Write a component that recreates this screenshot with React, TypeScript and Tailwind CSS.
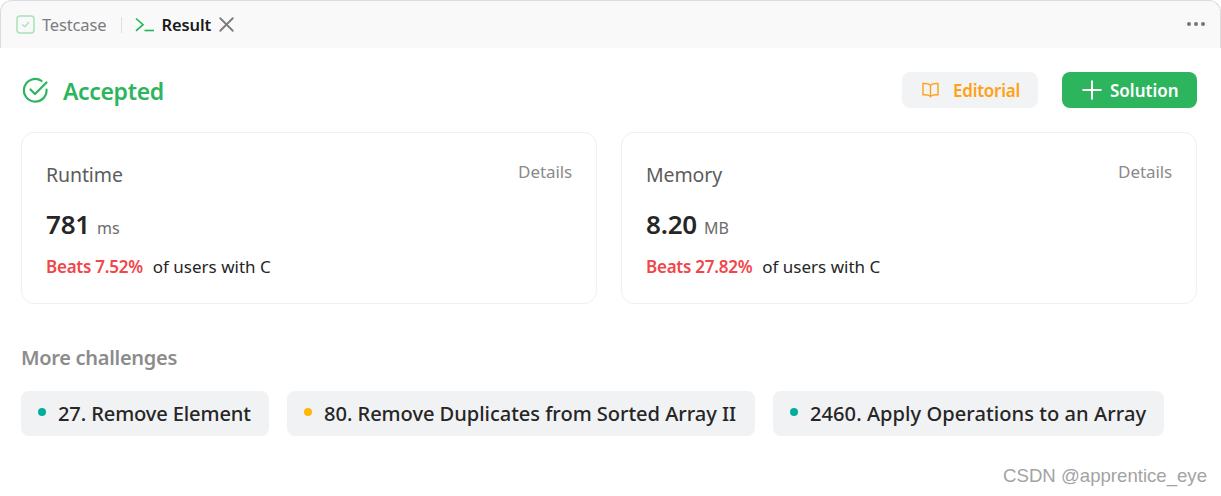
import { Plus, X } from "lucide-react";

const font = { fontFamily: '"Noto Sans", sans-serif' };

function StatCard({ title, value, unit, beats }: { title: string; value: string; unit: string; beats: string }) {
    return (
        <div className="flex-1 h-[172px] rounded-[13px] border border-[#f0f0f0] pl-6 pr-6 pt-[26px]">
            <div className="flex justify-between">
                <span className="text-[19.5px] leading-[32px] text-[#5c5c5c] tracking-[-0.1px]">{title}</span>
                <span className="text-[17px] leading-[26px] text-[#8a8a8a] tracking-[-0.1px]">Details</span>
            </div>
            <div className="flex items-baseline mt-[17px] h-[32px]">
                <span className="text-[26px] leading-[32px] font-semibold text-[#262626] tracking-[-0.2px]">{value}</span>
                <span className="text-[16px] ml-[7px] text-[#6b6b6b]">{unit}</span>
            </div>
            <div className="flex mt-[15px] text-[17px] leading-[24px]">
                <span className="font-semibold text-[#f0474b] tracking-[-0.25px]">Beats {beats}</span>
                <span className="ml-[10px] text-[#262626]">of users with C</span>
            </div>
        </div>
    );
}

function Challenge({ color, label, size }: { color: string; label: string; size: string }) {
    return (
        <div className={`flex items-center h-[45px] pl-[17px] rounded-[8px] bg-[#f1f2f4] ${size}`}>
            <span className={`w-[8px] h-[8px] rounded-full mb-[4px] ${color}`} />
            <span className="ml-[12px] mt-[1px] text-[20.1px] font-medium text-[#262626]">{label}</span>
        </div>
    );
}

export default function App() {
    return (
        <div className="relative w-[1221px] h-[496px] bg-white overflow-hidden" style={font}>
            <div className="flex items-center justify-between h-[48px] pl-[15px] pr-[15px] bg-[#f9f9f9] border-t border-x border-[#dcdcdc] rounded-t-[12px]">
                <div className="flex items-center">
                    <svg width="19" height="19" viewBox="0 0 19 19" fill="none">
                        <rect x="1" y="1" width="17" height="17" rx="3" stroke="#a6e3b8" strokeWidth="1.5" />
                        <path d="M6.5 9.8l2.2 2 4-4.3" stroke="#a6e3b8" strokeWidth="1.3" strokeLinecap="round" strokeLinejoin="round" />
                    </svg>
                    <span className="ml-[7px] mt-[1px] text-[16.5px] text-[#7c7c80] tracking-[-0.15px]">Testcase</span>
                    <span className="ml-[15px] w-px h-[16px] bg-[#e0e0e0]" />
                    <svg className="ml-[13px]" width="20" height="16" viewBox="0 0 20 16" fill="none">
                        <path d="M1 1.5l7 6.2-7 6.2" stroke="#1db954" strokeWidth="1.6" />
                        <path d="M9.5 13.5h9.5" stroke="#1db954" strokeWidth="1.6" />
                    </svg>
                    <span className="ml-[6px] mt-[1px] text-[16.5px] font-semibold text-[#1a1a1a] tracking-[-0.1px]">Result</span>
                    <X className="ml-[3px] text-[#7a7a7a]" size={25} strokeWidth={1.7} />
                </div>
                <div className="flex gap-[3px] mb-[2px]">
                    <span className="w-[4px] h-[4px] rounded-full bg-[#757575]" />
                    <span className="w-[4px] h-[4px] rounded-full bg-[#757575]" />
                    <span className="w-[4px] h-[4px] rounded-full bg-[#757575]" />
                </div>
            </div>

            <div className="pr-[24px] pl-[21px]">
                <div className="flex items-center justify-between mt-[24px] h-[36px]">
                    <div className="flex items-center">
                        <svg className="ml-[1px]" width="27" height="27" viewBox="0 0 27 27" fill="none">
                            <path d="M24.5 12.5a11.3 11.3 0 1 1-5-8.6" stroke="#2db55d" strokeWidth="2.2" strokeLinecap="round" />
                            <path d="M8.5 12.5l4.5 4.5L24.5 5.5" stroke="#2db55d" strokeWidth="2.2" strokeLinecap="round" strokeLinejoin="round" />
                        </svg>
                        <span className="ml-[14px] mt-[2px] text-[23px] font-semibold text-[#2db55d] tracking-[-0.35px]">Accepted</span>
                    </div>
                    <div className="flex items-center gap-[24px]">
                        <div className="flex items-center w-[136px] h-[36px] pl-[20px] rounded-[8px] bg-[#f2f3f5]">
                            <svg width="17" height="17" viewBox="0 0 17 17" fill="none" stroke="#ffa116" strokeWidth="1.4">
                                <path d="M8.5 3.2C7 1.8 4 1.4 1 1.6v11.2c3-.2 5.5 0 7.5 1.4 2-1.4 4.5-1.6 7.5-1.4V1.6c-3-.2-6 .2-7.5 1.6z" />
                                <path d="M8.5 3.2v12.3" />
                            </svg>
                            <span className="ml-[14px] mt-[1px] text-[17px] font-semibold text-[#ffa116] tracking-[-0.25px]">Editorial</span>
                        </div>
                        <div className="flex items-center w-[135px] h-[36px] pl-[15px] rounded-[8px] bg-[#2db55d]">
                            <Plus className="text-white" size={30} strokeWidth={1.6} />
                            <span className="ml-[3px] mt-[1px] text-[17px] font-semibold text-white">Solution</span>
                        </div>
                    </div>
                </div>

                <div className="flex gap-[24px] mt-[24px]">
                    <StatCard title="Runtime" value="781" unit="ms" beats="7.52%" />
                    <StatCard title="Memory" value="8.20" unit="MB" beats="27.82%" />
                </div>

                <div className="mt-[38px] text-[20px] leading-[32px] font-semibold text-[#8c8c8c] tracking-[-0.3px]">More challenges</div>

                <div className="flex gap-[18px] mt-[17px]">
                    <Challenge color="bg-[#00af9b]" size="w-[248px] tracking-[-0.13px]" label="27. Remove Element" />
                    <Challenge color="bg-[#ffb800]" size="w-[468px] tracking-[-0.05px]" label="80. Remove Duplicates from Sorted Array II" />
                    <Challenge color="bg-[#00af9b]" size="w-[391px] tracking-[0.04px]" label="2460. Apply Operations to an Array" />
                </div>
            </div>

            <span className="absolute right-[14px] top-[465px] text-[18.6px] leading-[22px] text-[#a3a3a3] font-['Liberation_Sans',sans-serif]">CSDN @apprentice_eye</span>
        </div>
    );
}
